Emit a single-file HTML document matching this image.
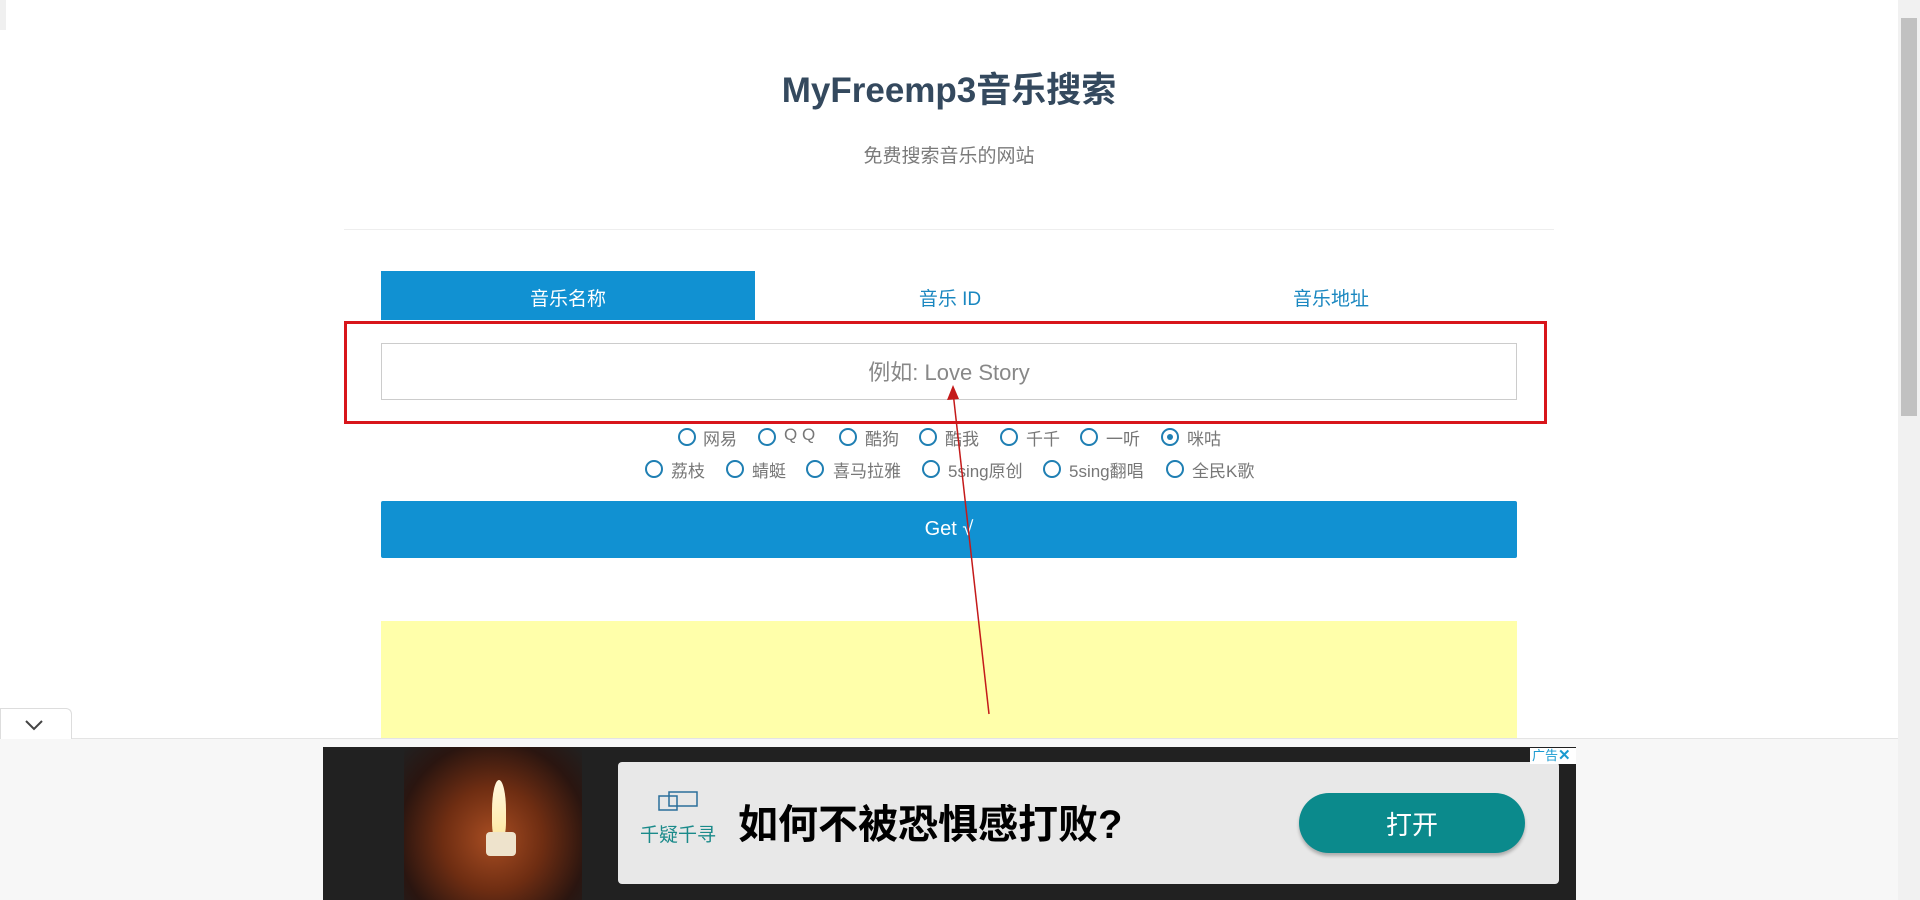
<!DOCTYPE html>
<html><head><meta charset="utf-8"><style>
*{margin:0;padding:0;box-sizing:border-box}
body{width:1920px;height:900px;overflow:hidden;background:#fff;font-family:"Liberation Sans","Noto Sans CJK SC",sans-serif;position:relative}
.a{position:absolute}
.title{left:0;width:1898px;top:62px;text-align:center;font-size:35px;font-weight:bold;color:#34495e}
.sub{left:0;width:1898px;top:141px;text-align:center;font-size:19px;color:#7a7a7a}
.rad{position:absolute;width:18px;height:18px;border:2.5px solid #1f7fb3;border-radius:50%}
.lbl{position:absolute;font-size:17px;color:#777;white-space:nowrap}
</style></head><body>
<div class="a" style="left:0;top:0;width:6px;height:30px;background:#f0f0f0"></div>
<div class="a title">MyFreemp3音乐搜索</div>
<div class="a sub">免费搜索音乐的网站</div>
<div class="a" style="left:344px;top:229px;width:1210px;height:1px;background:#eee"></div>

<div class="a" style="left:381px;top:271px;width:374px;height:49px;background:#1191d2"></div>
<div class="a" style="left:381px;top:284px;width:374px;text-align:center;font-size:19px;color:#fff">音乐名称</div>
<div class="a" style="left:755px;top:284px;width:390px;text-align:center;font-size:19px;color:#1a87c0">音乐 ID</div>
<div class="a" style="left:1145px;top:284px;width:372px;text-align:center;font-size:19px;color:#1a87c0">音乐地址</div>

<div class="a" style="left:381px;top:343px;width:1136px;height:57px;border:1px solid #ccc;background:#fff"></div>
<div class="a" style="left:381px;top:355px;width:1136px;text-align:center;font-size:22px;color:#888">例如: Love Story</div>
<div class="a" style="left:344px;top:321px;width:1203px;height:103px;border:3px solid #d8151b"></div>

<div class="rad" style="left:678px;top:428px"></div><div class="lbl" style="left:703px;top:425px">网易</div>
<div class="rad" style="left:758px;top:428px"></div><div class="lbl" style="left:784px;top:425px">Q Q</div>
<div class="rad" style="left:839px;top:428px"></div><div class="lbl" style="left:865px;top:425px">酷狗</div>
<div class="rad" style="left:919px;top:428px"></div><div class="lbl" style="left:945px;top:425px">酷我</div>
<div class="rad" style="left:1000px;top:428px"></div><div class="lbl" style="left:1026px;top:425px">千千</div>
<div class="rad" style="left:1080px;top:428px"></div><div class="lbl" style="left:1106px;top:425px">一听</div>
<div class="rad" style="left:1161px;top:428px"><div style="position:absolute;left:3.5px;top:3.5px;width:6px;height:6px;border-radius:50%;background:#1f7fb3"></div></div><div class="lbl" style="left:1187px;top:425px">咪咕</div>

<div class="rad" style="left:645px;top:460px"></div><div class="lbl" style="left:671px;top:457px">荔枝</div>
<div class="rad" style="left:726px;top:460px"></div><div class="lbl" style="left:752px;top:457px">蜻蜓</div>
<div class="rad" style="left:806px;top:460px"></div><div class="lbl" style="left:833px;top:457px">喜马拉雅</div>
<div class="rad" style="left:922px;top:460px"></div><div class="lbl" style="left:948px;top:457px">5sing原创</div>
<div class="rad" style="left:1043px;top:460px"></div><div class="lbl" style="left:1069px;top:457px">5sing翻唱</div>
<div class="rad" style="left:1166px;top:460px"></div><div class="lbl" style="left:1192px;top:457px">全民K歌</div>

<div class="a" style="left:381px;top:501px;width:1136px;height:57px;background:#1191d2;border-radius:2px"></div>
<div class="a" style="left:381px;top:518px;width:1136px;text-align:center;font-size:20px;color:#fff">Get √</div>

<div class="a" style="left:381px;top:621px;width:1136px;height:117px;background:#ffffaa"></div>

<div class="a" style="left:0;top:738px;width:1898px;height:162px;background:#f7f7f7;border-top:1px solid #e4e4e4"></div>
<div class="a" style="left:0;top:708px;width:72px;height:31px;background:#fff;border:1px solid #ddd;border-bottom:none;border-radius:0 6px 0 0"></div>
<svg class="a" style="left:24px;top:718px" width="20" height="14"><path d="M2 3 L10 11 L18 3" stroke="#444" stroke-width="2" fill="none"/></svg>

<div class="a" style="left:323px;top:747px;width:1253px;height:153px;background:#212121"></div>
<div class="a" style="left:404px;top:747px;width:178px;height:153px;background:radial-gradient(ellipse at 50% 60%,#a84d22 0%,#6e2d12 40%,#2a1510 75%,#212121 100%)"></div>
<div class="a" style="left:492px;top:780px;width:14px;height:60px;background:linear-gradient(#fff8e0,#fde7a0);border-radius:50% 50% 30% 30%"></div>
<div class="a" style="left:486px;top:832px;width:30px;height:24px;background:#eee3cc;border-radius:4px"></div>
<div class="a" style="left:618px;top:762px;width:941px;height:122px;background:#e8e8e8;border-radius:4px"></div>
<svg class="a" style="left:655px;top:790px" width="46" height="26"><path d="M4 6 L22 6 L22 20 L4 20 Z M14 2 L42 2 L42 16 L14 16 Z" stroke="#2a6f9a" stroke-width="1.5" fill="none"/></svg>
<div class="a" style="left:640px;top:820px;font-size:19px;color:#1a8a8a">千疑千寻</div>
<div class="a" style="left:738px;top:792px;font-size:40px;font-weight:bold;color:#000">如何不被恐惧感打败?</div>
<div class="a" style="left:1299px;top:793px;width:226px;height:60px;background:#0b8a8c;border-radius:30px;box-shadow:0 3px 3px rgba(0,0,0,.25)"></div>
<div class="a" style="left:1299px;top:805px;width:226px;text-align:center;font-size:26px;color:#fff">打开</div>
<div class="a" style="left:1530px;top:748px;width:46px;height:16px;background:#fff;font-size:13px;color:#1a9ad0;line-height:16px;padding-left:2px">广告<b style="font-size:15px">✕</b></div>

<svg class="a" style="left:0;top:0" width="1920" height="900"><line x1="989" y1="714" x2="953" y2="392" stroke="#c41a1a" stroke-width="1.5"/><path d="M953 385 L947 400 L959 399 Z" fill="#c41a1a"/></svg>

<div class="a" style="left:1898px;top:0;width:22px;height:900px;background:#f1f1f1"></div>
<div class="a" style="left:1901px;top:18px;width:16px;height:398px;background:#c1c1c1"></div>
</body></html>
